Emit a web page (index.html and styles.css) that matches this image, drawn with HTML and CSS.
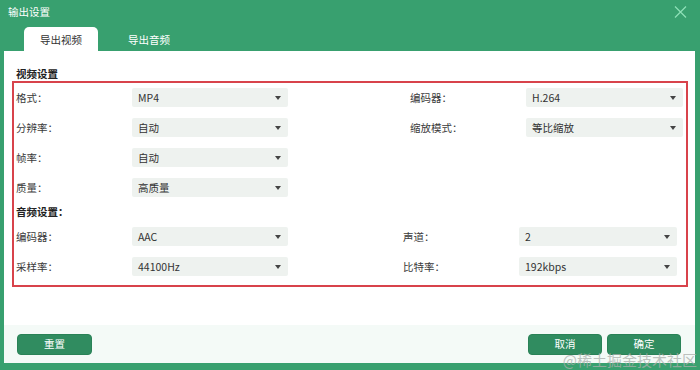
FILE: index.html
```html
<!DOCTYPE html>
<html lang="zh">
<head>
<meta charset="utf-8">
<title>输出设置</title>
<link rel="stylesheet" href="styles.css">
</head>
<body>
<div class="dialog">
  <div class="titlebar">
    <span class="title">输出设置</span>
    <svg class="close" width="13" height="12" viewBox="0 0 13 12"><path d="M1 0.5 L12 11.5 M12 0.5 L1 11.5" stroke="#8fe0b8" stroke-width="1.2" fill="none"/></svg>
  </div>
  <div class="tabs">
    <div class="tab active">导出视频</div>
    <div class="tab">导出音频</div>
  </div>
  <div class="panel">
    <div class="body">
      <div class="heading">视频设置</div>
      <div class="box">
        <div class="grid video">
          <span class="label">格式：</span>
          <div class="select">MP4<i class="arrow"></i></div>
          <span></span>
          <span class="label">编码器：</span>
          <div class="select">H.264<i class="arrow"></i></div>

          <span class="label">分辨率：</span>
          <div class="select">自动<i class="arrow"></i></div>
          <span></span>
          <span class="label">缩放模式：</span>
          <div class="select">等比缩放<i class="arrow"></i></div>

          <span class="label">帧率：</span>
          <div class="select">自动<i class="arrow"></i></div>
          <span></span><span></span><span></span>

          <span class="label">质量：</span>
          <div class="select">高质量<i class="arrow"></i></div>
          <span></span><span></span><span></span>
        </div>
        <div class="heading sub">音频设置：</div>
        <div class="grid audio">
          <span class="label">编码器：</span>
          <div class="select">AAC<i class="arrow"></i></div>
          <span></span>
          <span class="label">声道：</span>
          <div class="select">2<i class="arrow"></i></div>

          <span class="label">采样率：</span>
          <div class="select">44100Hz<i class="arrow"></i></div>
          <span></span>
          <span class="label">比特率：</span>
          <div class="select">192kbps<i class="arrow"></i></div>
        </div>
      </div>
    </div>
    <div class="footer">
      <button class="btn">重置</button>
      <div class="right">
        <button class="btn">取消</button>
        <button class="btn">确定</button>
      </div>
    </div>
    <div class="watermark">@稀土掘金技术社区</div>
  </div>
</div>
</body>
</html>
```

FILE: styles.css
```css
* { box-sizing: border-box; }
html, body { margin: 0; padding: 0; }
body {
  width: 700px;
  height: 370px;
  background: #38a06f;
  font-family: "Noto Sans CJK SC", "Noto Sans", sans-serif;
  font-size: 10.5px;
  color: #333;
  overflow: hidden;
}
.dialog { width: 700px; height: 370px; }
.titlebar {
  height: 27px;
  display: flex;
  align-items: center;
  justify-content: space-between;
  padding: 0 13px 3px 8px;
  color: #fff;
}
.title { font-size: 10.5px; line-height: 14px; }
.close { display: block; }
.tabs {
  height: 24px;
  display: flex;
  padding-left: 24px;
}
.tab {
  width: 74px;
  display: flex;
  align-items: center;
  justify-content: center;
  color: #fff;
  border-radius: 5px 5px 0 0;
}
.tab + .tab { margin-left: 13px; justify-content: flex-start; padding-left: 17px; width: 80px; }
.tab.active { background: #fff; color: #333; }
.panel {
  position: relative;
  margin-left: 4px;
  width: 691px;
  height: 312px;
  background: #fff;
  display: flex;
  flex-direction: column;
}
.body { flex: 1; padding-top: 15px; }
.heading {
  font-weight: bold;
  color: #222;
  line-height: 15px;
  padding-left: 12px;
}
.box {
  margin: 0 7px 0 8px;
  border: 2px solid #d8434b;
  padding: 5px 3px 9px 2px;
}
.grid {
  display: grid;
  grid-auto-rows: 19px;
  row-gap: 11px;
  align-items: center;
}
.video { grid-template-columns: 116px 156px 122px 116px 157px; }
.audio { grid-template-columns: 116px 156px 115px 116px 158px; }
.heading.sub { padding: 7px 0 8px 0; }
.label { color: #3a3a3a; line-height: 19px; }
.select {
  position: relative;
  height: 19px;
  line-height: 19px;
  background: #eef2ef;
  border-radius: 2px;
  padding-left: 6px;
  color: #333;
}
.arrow {
  position: absolute;
  right: 7px;
  top: 8px;
  width: 0;
  height: 0;
  border-left: 3px solid transparent;
  border-right: 3px solid transparent;
  border-top: 4px solid #444;
}
.footer {
  height: 38px;
  background: #f4faf7;
  display: flex;
  justify-content: space-between;
  align-items: flex-start;
  padding: 9px 14px 0 13px;
}
.right { display: flex; gap: 5px; }
.btn {
  width: 75px;
  height: 21px;
  border: 1px solid #2a8257;
  border-radius: 4px;
  background: #308c60;
  color: #fff;
  font-family: inherit;
  font-size: 10.5px;
  line-height: 12px;
  padding: 0 0 1px 0;
}
.right .btn { width: 74px; }
.watermark {
  position: absolute;
  right: -2px;
  bottom: -4px;
  height: 15px;
  font-size: 15px;
  line-height: 15px;
  color: rgba(170, 175, 172, 0.75);
  white-space: nowrap;
}
```
